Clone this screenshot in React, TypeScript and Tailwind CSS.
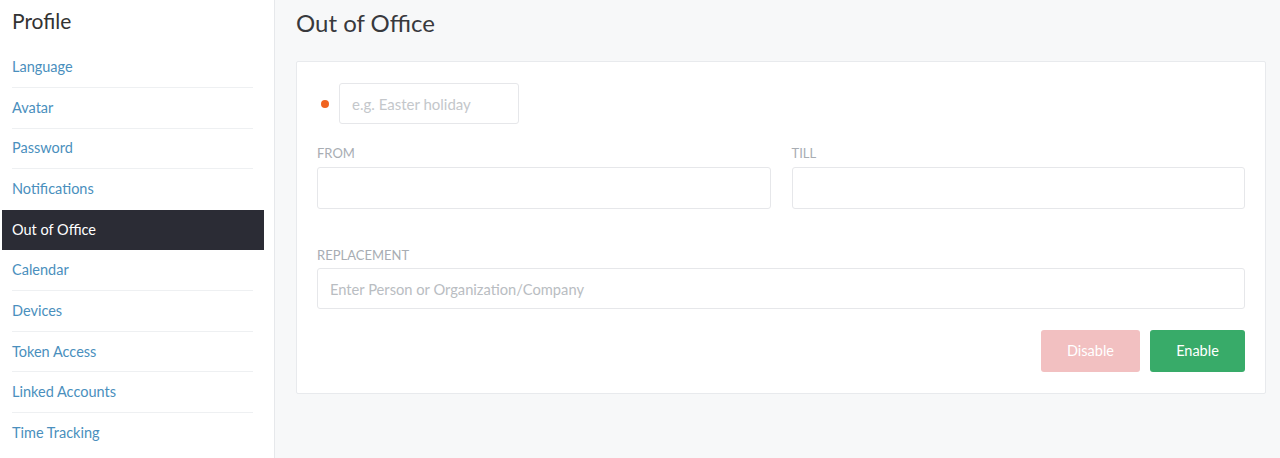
import React from 'react'

const navItems = [
  'Language',
  'Avatar',
  'Password',
  'Notifications',
  'Out of Office',
  'Calendar',
  'Devices',
  'Token Access',
  'Linked Accounts',
  'Time Tracking',
]

const font = { fontFamily: 'Lato, "Noto Sans", sans-serif' }

export default function App() {
  const active = 'Out of Office'

  return (
    <div className="flex h-[458px] w-full overflow-hidden bg-[#f7f8f9] text-[#38393d]" style={font}>
      <aside className="w-[275px] shrink-0 border-r border-[#e6e8eb] bg-white pt-[8px]">
        <h2 className="px-[12px] text-[21px] leading-[26px] text-[#333]">Profile</h2>
        <nav className="mt-[13px] pl-[2px] pr-[10px]">
          {navItems.map((item) => {
            const isActive = item === active
            return (
              <div key={item} className="h-[40.65px]">
                <a
                  href="#"
                  className={`flex h-[40px] items-center px-[10px] text-[14.5px] ${
                    isActive ? 'bg-[#2b2c35] text-white' : 'text-[#4a8fbd]'
                  }`}
                >
                  {item}
                </a>
                {!isActive && item !== 'Notifications' && item !== 'Time Tracking' && (
                  <div className="ml-[10px] mr-[11px] h-px bg-[#eef0f2]" />
                )}
              </div>
            )
          })}
        </nav>
      </aside>

      <main className="flex-1 pl-[21px] pr-[14px] pt-[7px]">
        <h1 className="text-[24px] leading-[32px] text-[#38393d]">Out of Office</h1>

        <div className="mt-[22px] rounded-[2px] border border-[#e8eaed] bg-white px-[20px] pb-[21px] pt-[21px]">
          <div className="flex items-center gap-[10px] pl-[4px]">
            <span className="h-[8px] w-[8px] rounded-full bg-[#f0631f]" />
            <input
              placeholder="e.g. Easter holiday"
              className="h-[41px] w-[180px] rounded-[3px] border border-[#e6e7ea] px-[12px] text-[15px] outline-none placeholder:text-[#c4c7cb]"
            />
          </div>

          <div className="mt-[20px] grid grid-cols-2 gap-[21px]">
            <label className="flex flex-col">
              <span className="text-[13px] uppercase text-[#a8adb3]">From</span>
              <input className="mt-[3px] h-[42px] rounded-[3px] border border-[#e6e7ea] outline-none" />
            </label>
            <label className="flex flex-col">
              <span className="text-[13px] uppercase text-[#a8adb3]">Till</span>
              <input className="mt-[3px] h-[42px] rounded-[3px] border border-[#e6e7ea] outline-none" />
            </label>
          </div>

          <label className="mt-[37px] flex flex-col">
            <span className="text-[13px] uppercase text-[#a8adb3]">Replacement</span>
            <input
              placeholder="Enter Person or Organization/Company"
              className="mt-[3px] h-[41px] rounded-[3px] border border-[#e6e7ea] px-[12px] text-[14.7px] outline-none placeholder:text-[#b9bdc2]"
            />
          </label>

          <div className="mt-[21px] flex justify-end gap-[10px]">
            <button className="h-[42px] w-[99px] rounded-[3px] bg-[#f2c0c1] text-[14.5px] text-white">
              Disable
            </button>
            <button className="h-[42px] w-[95px] rounded-[3px] bg-[#38ab69] text-[14.5px] text-white">
              Enable
            </button>
          </div>
        </div>
      </main>
    </div>
  )
}
